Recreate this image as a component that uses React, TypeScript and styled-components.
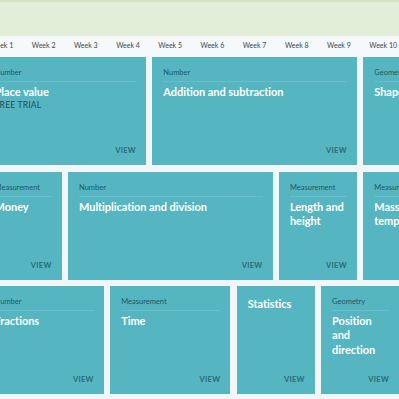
import React from "react";
import styled, { createGlobalStyle } from "styled-components";

const GlobalStyle = createGlobalStyle`
  html, body {
    margin: 0;
    padding: 0;
    background: #f1f7f9;
    overflow: hidden;
    font-family: Lato, "Noto Sans", sans-serif;
  }
`;

const Page = styled.div`
  width: 399px;
  height: 399px;
  overflow: hidden;
  background: #f1f7f9;
`;

const TopBand = styled.div`
  height: 34px;
  background: #e3eed8;
  border-top: 2px solid #d3e2c6;
`;

const Board = styled.div`
  margin-left: -16.4px;
  width: 520px;
`;

const WeekRow = styled.div`
  display: grid;
  grid-template-columns: repeat(12, 35.8px);
  column-gap: 6.4px;
  height: 21px;
  box-sizing: border-box;
  padding-bottom: 3px;
  align-items: center;
  background: #f5f9fb;
`;

const WeekLabel = styled.div`
  padding-left: 6px;
  font-size: 7px;
  color: #3a474e;
  white-space: nowrap;
`;

const CardGrid = styled.div`
  display: grid;
  grid-template-columns: repeat(12, 35.8px);
  grid-auto-rows: 108px;
  column-gap: 6.4px;
  row-gap: 6.5px;
`;

const Card = styled.div<{ $start: number; $span: number }>`
  grid-column: ${(p) => p.$start} / span ${(p) => p.$span};
  background: #55b5c1;
  display: flex;
  flex-direction: column;
  padding: 11px 10px 9px 11px;
  box-sizing: border-box;
  min-width: 0;
`;

const Category = styled.div`
  font-size: 7.5px;
  line-height: 10px;
  color: #1f5866;
  white-space: nowrap;
  padding-bottom: 3px;
  border-bottom: 1px solid #68bfca;
  margin-bottom: 3px;
`;

const Title = styled.div`
  font-size: 11px;
  line-height: 14.3px;
  font-weight: 700;
  letter-spacing: -0.05px;
  color: #ffffff;
`;

const Trial = styled.div`
  font-size: 8.5px;
  line-height: 12px;
  color: #1d4d59;
  letter-spacing: 0.2px;
`;

const View = styled.div`
  margin-top: auto;
  align-self: flex-end;
  font-size: 7.5px;
  line-height: 10px;
  font-weight: 700;
  color: #2a6d7a;
  letter-spacing: 0.3px;
`;

type Unit = {
  start: number;
  span: number;
  category?: string;
  title: string;
  trial?: boolean;
};

const units: Unit[] = [
  { start: 1, span: 4, category: "Number", title: "Place value", trial: true },
  { start: 5, span: 5, category: "Number", title: "Addition and subtraction" },
  { start: 10, span: 3, category: "Geometry", title: "Shape" },
  { start: 1, span: 2, category: "Measurement", title: "Money" },
  { start: 3, span: 5, category: "Number", title: "Multiplication and division" },
  { start: 8, span: 2, category: "Measurement", title: "Length and height" },
  { start: 10, span: 2, category: "Measurement", title: "Mass and temperature" },
  { start: 1, span: 3, category: "Number", title: "Fractions" },
  { start: 4, span: 3, category: "Measurement", title: "Time" },
  { start: 7, span: 2, title: "Statistics" },
  { start: 9, span: 2, category: "Geometry", title: "Position and direction" },
];

export default function App() {
  return (
    <Page>
      <GlobalStyle />
      <TopBand />
      <Board>
        <WeekRow>
          {Array.from({ length: 12 }, (_, i) => (
            <WeekLabel key={i}>Week {i + 1}</WeekLabel>
          ))}
        </WeekRow>
        <CardGrid>
          {units.map((u) => (
            <Card key={u.title} $start={u.start} $span={u.span}>
              {u.category && <Category>{u.category}</Category>}
              <Title>{u.title}</Title>
              {u.trial && <Trial>FREE TRIAL</Trial>}
              <View>VIEW</View>
            </Card>
          ))}
        </CardGrid>
      </Board>
    </Page>
  );
}
